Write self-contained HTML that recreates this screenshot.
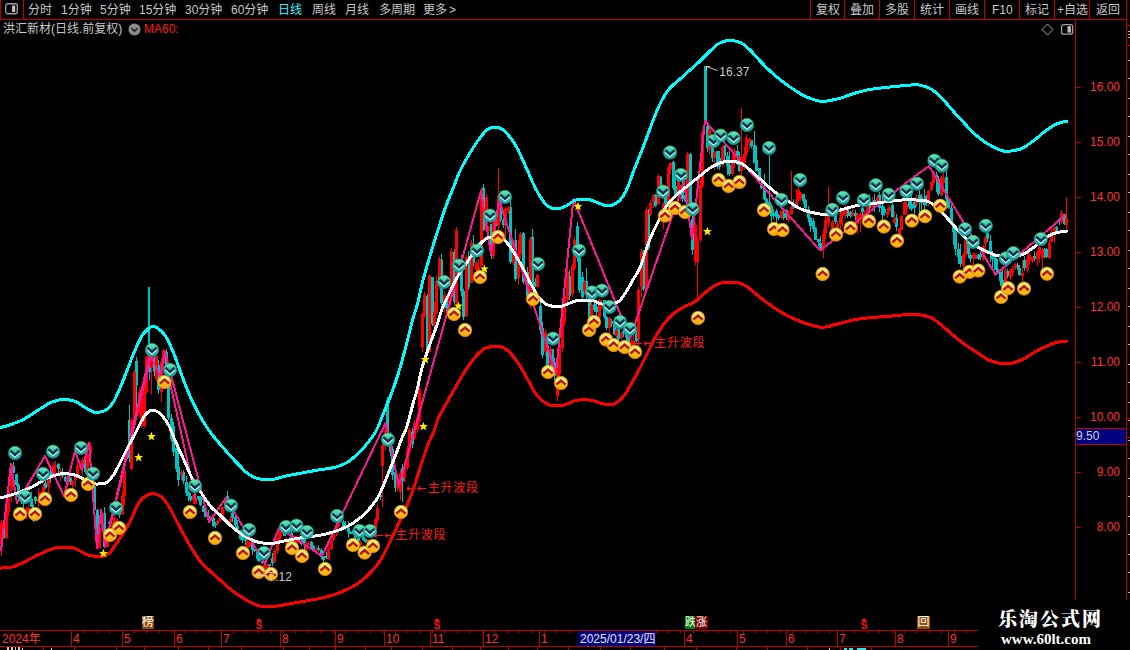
<!DOCTYPE html>
<html lang="zh-CN">
<head>
<meta charset="utf-8">
<title>洪汇新材 日线</title>
<style>
html,body{margin:0;padding:0;background:#000;}
body{width:1130px;height:650px;overflow:hidden;position:relative;font-family:"Liberation Sans","Noto Sans CJK SC",sans-serif;font-size:12px;color:#c8c8c8;}
.abs{position:absolute;white-space:nowrap;line-height:14px;}
.tb{position:absolute;top:2px;height:16px;line-height:16px;font-size:12px;color:#c8c8c8;white-space:nowrap;}
.hl{position:absolute;background:#c00000;height:1px;}
.vl{position:absolute;background:#c00000;width:1px;}
.ax{position:absolute;left:1084px;width:36px;text-align:right;color:#ff3232;font-size:12px;line-height:14px;}
.mo{position:absolute;top:632px;color:#ff3232;font-size:12px;line-height:14px;}
.lab{position:absolute;color:#ff2020;font-size:12px;line-height:14px;white-space:nowrap;}
.badge{position:absolute;width:12px;height:13px;line-height:13px;font-size:11px;color:#fff;text-align:center;overflow:hidden;}
</style>
</head>
<body>
<svg id="chart" width="1130" height="650" viewBox="0 0 1130 650" style="position:absolute;left:0;top:0">
<defs>
<linearGradient id="gg" x1="0" y1="0" x2="0" y2="1"><stop offset="0" stop-color="#70ecb0"/><stop offset="0.5" stop-color="#2cc2a4"/><stop offset="1" stop-color="#10a0a4"/></linearGradient>
<linearGradient id="yg" x1="0" y1="0" x2="0" y2="1"><stop offset="0" stop-color="#fff45a"/><stop offset="0.5" stop-color="#ffd21e"/><stop offset="1" stop-color="#ff9a10"/></linearGradient>
<g id="gi"><circle r="6.7" fill="url(#gg)" stroke="#178a84" stroke-width="0.7"/><path d="M-4.6,-0.2 L0,4 L4.6,-0.2" fill="none" stroke="#e8f6f0" stroke-width="1.3"/><path d="M-4.6,-2.4 L0,1.8 L4.6,-2.4" fill="none" stroke="#0e3350" stroke-width="2.4"/></g>
<g id="yi"><circle r="6.7" fill="url(#yg)" stroke="#e89400" stroke-width="0.7"/><path d="M-4.6,-0.9 L0,-4.7 L4.6,-0.9" fill="none" stroke="#fff3d0" stroke-width="1.3"/><path d="M-4.6,1.6 L0,-2.4 L4.6,1.6" fill="none" stroke="#b81410" stroke-width="2.5"/></g>
<path id="st" d="M0,-4.6 L1.2,-1.4 L4.5,-1.4 L1.9,0.6 L2.9,4 L0,2 L-2.9,4 L-1.9,0.6 L-4.5,-1.4 L-1.2,-1.4Z" fill="#ffee00"/>
</defs>
<g shape-rendering="crispEdges"><path d="M3,520h1V539h-1zM13,462h1V473h-1zM16,474h1V486h-1zM18,483h1V499h-1zM21,495h1V504h-1zM23,499h1V515h-1zM31,492h1V507h-1zM33,505h1V522h-1zM35,496h1V504h-1zM45,481h1V489h-1zM50,470h1V483h-1zM58,463h1V473h-1zM62,468h1V478h-1zM65,472h1V482h-1zM70,477h1V485h-1zM85,459h1V474h-1zM94,485h1V510h-1zM97,509h1V548h-1zM104,507h1V548h-1zM109,521h1V525h-1zM119,509h1V518h-1zM126,455h1V462h-1zM129,405h1V462h-1zM136,357h1V411h-1zM149,287h1V380h-1zM154,355h1V376h-1zM158,360h1V394h-1zM166,349h1V370h-1zM168,366h1V420h-1zM171,414h1V442h-1zM173,422h1V456h-1zM176,440h1V472h-1zM178,450h1V486h-1zM183,470h1V484h-1zM186,476h1V496h-1zM188,491h1V501h-1zM190,493h1V502h-1zM198,496h1V501h-1zM200,496h1V506h-1zM203,505h1V512h-1zM205,505h1V517h-1zM208,510h1V522h-1zM213,517h1V527h-1zM215,522h1V528h-1zM227,491h1V501h-1zM232,511h1V522h-1zM235,514h1V530h-1zM237,520h1V530h-1zM240,530h1V540h-1zM242,536h1V543h-1zM245,537h1V545h-1zM252,540h1V555h-1zM254,549h1V552h-1zM257,549h1V561h-1zM259,557h1V562h-1zM262,560h1V564h-1zM269,564h1V570h-1zM272,553h1V566h-1zM284,528h1V536h-1zM289,537h1V543h-1zM291,526h1V538h-1zM301,531h1V546h-1zM304,537h1V550h-1zM311,541h1V548h-1zM313,545h1V551h-1zM318,545h1V551h-1zM321,548h1V559h-1zM323,556h1V563h-1zM326,552h1V559h-1zM343,520h1V530h-1zM345,521h1V530h-1zM348,521h1V538h-1zM350,531h1V534h-1zM353,530h1V535h-1zM355,533h1V541h-1zM358,537h1V542h-1zM363,534h1V541h-1zM365,539h1V543h-1zM372,529h1V536h-1zM380,491h1V500h-1zM387,397h1V438h-1zM390,432h1V456h-1zM392,446h1V480h-1zM395,468h1V492h-1zM402,464h1V502h-1zM412,428h1V448h-1zM427,294h1V352h-1zM432,277h1V326h-1zM441,254h1V305h-1zM446,296h1V311h-1zM454,249h1V304h-1zM459,276h1V272h-1zM461,255h1V296h-1zM463,289h1V320h-1zM468,251h1V290h-1zM473,235h1V266h-1zM483,184h1V231h-1zM491,224h1V259h-1zM495,217h1V227h-1zM500,191h1V222h-1zM503,218h1V228h-1zM510,193h1V264h-1zM515,229h1V281h-1zM523,232h1V284h-1zM527,267h1V297h-1zM532,229h1V289h-1zM535,278h1V287h-1zM540,300h1V334h-1zM542,322h1V358h-1zM547,340h1V368h-1zM552,349h1V370h-1zM554,358h1V380h-1zM569,270h1V300h-1zM577,222h1V262h-1zM579,254h1V293h-1zM582,272h1V300h-1zM586,268h1V301h-1zM589,297h1V320h-1zM594,297h1V312h-1zM596,304h1V319h-1zM604,300h1V319h-1zM606,316h1V330h-1zM611,319h1V327h-1zM614,320h1V335h-1zM618,327h1V349h-1zM623,329h1V337h-1zM626,332h1V347h-1zM628,334h1V344h-1zM636,331h1V342h-1zM643,250h1V291h-1zM648,209h1V250h-1zM655,194h1V207h-1zM660,176h1V195h-1zM665,188h1V206h-1zM673,161h1V190h-1zM675,171h1V198h-1zM682,177h1V202h-1zM685,189h1V202h-1zM690,153h1V216h-1zM692,216h1V255h-1zM705,66h1V124h-1zM707,122h1V152h-1zM712,136h1V162h-1zM717,151h1V169h-1zM719,151h1V170h-1zM724,145h1V161h-1zM727,152h1V175h-1zM729,151h1V176h-1zM737,145h1V165h-1zM739,152h1V172h-1zM751,140h1V148h-1zM754,131h1V163h-1zM756,146h1V171h-1zM759,168h1V182h-1zM761,180h1V189h-1zM764,174h1V200h-1zM766,198h1V206h-1zM769,155h1V209h-1zM771,204h1V229h-1zM773,209h1V219h-1zM776,209h1V224h-1zM778,214h1V220h-1zM783,210h1V220h-1zM786,209h1V220h-1zM793,199h1V209h-1zM803,194h1V204h-1zM805,199h1V212h-1zM808,206h1V222h-1zM810,217h1V232h-1zM813,218h1V232h-1zM815,227h1V240h-1zM818,239h1V246h-1zM820,236h1V250h-1zM830,203h1V213h-1zM835,213h1V224h-1zM847,208h1V218h-1zM850,211h1V218h-1zM855,210h1V220h-1zM862,207h1V216h-1zM869,194h1V211h-1zM874,194h1V212h-1zM879,192h1V212h-1zM882,196h1V220h-1zM884,207h1V216h-1zM892,200h1V218h-1zM896,214h1V231h-1zM909,197h1V209h-1zM911,194h1V211h-1zM914,201h1V215h-1zM919,189h1V213h-1zM921,194h1V210h-1zM924,189h1V215h-1zM926,195h1V206h-1zM936,172h1V192h-1zM938,176h1V196h-1zM946,169h1V205h-1zM948,198h1V209h-1zM951,202h1V225h-1zM953,223h1V245h-1zM955,225h1V255h-1zM958,243h1V264h-1zM960,244h1V267h-1zM968,241h1V258h-1zM970,253h1V262h-1zM978,254h1V260h-1zM980,252h1V260h-1zM987,231h1V242h-1zM990,235h1V262h-1zM992,251h1V269h-1zM995,255h1V270h-1zM997,259h1V274h-1zM1000,270h1V286h-1zM1002,268h1V287h-1zM1007,269h1V278h-1zM1017,263h1V270h-1zM1019,265h1V276h-1zM1024,256h1V271h-1zM1034,252h1V261h-1zM1044,248h1V258h-1zM1046,248h1V258h-1zM1056,226h1V232h-1zM1059,218h1V225h-1zM1064,214h1V225h-1z" fill="#00c0c0"/><path d="M2,523h3V538h-3zM12,466h3V473h-3zM15,474h3V485h-3zM17,485h3V497h-3zM20,497h3V501h-3zM22,500h3V504h-3zM30,499h3V507h-3zM32,507h3V511h-3zM34,497h3V501h-3zM44,483h3V488h-3zM49,472h3V475h-3zM57,464h3V469h-3zM61,472h3V476h-3zM64,477h3V481h-3zM69,478h3V482h-3zM84,461h3V472h-3zM93,486h3V510h-3zM96,510h3V546h-3zM103,513h3V547h-3zM108,522h3V524h-3zM118,510h3V515h-3zM125,456h3V459h-3zM128,420h3V458h-3zM135,361h3V385h-3zM148,352h3V372h-3zM153,358h3V372h-3zM157,365h3V390h-3zM165,352h3V366h-3zM167,379h3V418h-3zM170,418h3V439h-3zM172,426h3V452h-3zM175,448h3V469h-3zM177,467h3V480h-3zM182,472h3V481h-3zM185,482h3V493h-3zM187,492h3V496h-3zM189,496h3V500h-3zM197,496h3V499h-3zM199,497h3V505h-3zM202,506h3V512h-3zM204,512h3V517h-3zM207,516h3V520h-3zM212,518h3V526h-3zM214,522h3V525h-3zM226,496h3V501h-3zM231,513h3V518h-3zM234,517h3V525h-3zM236,526h3V529h-3zM239,530h3V539h-3zM241,537h3V540h-3zM244,539h3V541h-3zM251,542h3V550h-3zM253,550h3V551h-3zM256,551h3V559h-3zM258,559h3V561h-3zM261,561h3V563h-3zM268,564h3V566h-3zM271,558h3V563h-3zM283,529h3V536h-3zM288,539h3V542h-3zM290,533h3V536h-3zM300,538h3V544h-3zM303,539h3V543h-3zM310,542h3V547h-3zM312,546h3V550h-3zM317,548h3V550h-3zM320,550h3V557h-3zM322,556h3V560h-3zM325,556h3V558h-3zM342,522h3V529h-3zM344,525h3V528h-3zM347,528h3V532h-3zM349,532h3V534h-3zM352,530h3V534h-3zM354,535h3V538h-3zM357,538h3V541h-3zM362,537h3V540h-3zM364,539h3V542h-3zM371,530h3V534h-3zM379,495h3V497h-3zM386,400h3V434h-3zM389,438h3V452h-3zM391,449h3V475h-3zM394,472h3V488h-3zM401,468h3V481h-3zM411,432h3V444h-3zM426,296h3V351h-3zM431,277h3V324h-3zM440,260h3V303h-3zM445,296h3V308h-3zM453,252h3V302h-3zM458,261h3V270h-3zM460,268h3V291h-3zM462,291h3V317h-3zM467,258h3V287h-3zM472,246h3V263h-3zM482,188h3V230h-3zM490,224h3V256h-3zM494,218h3V226h-3zM499,194h3V220h-3zM502,220h3V225h-3zM509,207h3V262h-3zM514,240h3V279h-3zM522,233h3V282h-3zM526,272h3V296h-3zM531,237h3V287h-3zM534,282h3V286h-3zM539,306h3V330h-3zM541,328h3V355h-3zM546,345h3V366h-3zM551,349h3V366h-3zM553,362h3V376h-3zM568,276h3V296h-3zM576,226h3V258h-3zM578,258h3V290h-3zM581,277h3V297h-3zM585,281h3V294h-3zM588,297h3V317h-3zM593,304h3V310h-3zM595,307h3V312h-3zM603,300h3V317h-3zM605,317h3V328h-3zM610,321h3V324h-3zM613,322h3V334h-3zM617,329h3V339h-3zM622,331h3V334h-3zM625,332h3V337h-3zM627,337h3V342h-3zM635,334h3V341h-3zM642,251h3V289h-3zM647,210h3V248h-3zM654,195h3V206h-3zM659,177h3V192h-3zM664,194h3V204h-3zM672,162h3V188h-3zM674,186h3V195h-3zM681,185h3V199h-3zM684,195h3V201h-3zM689,154h3V214h-3zM691,219h3V250h-3zM704,66h3V122h-3zM706,126h3V148h-3zM711,140h3V158h-3zM716,151h3V167h-3zM718,158h3V167h-3zM723,146h3V156h-3zM726,156h3V166h-3zM728,165h3V174h-3zM736,151h3V156h-3zM738,157h3V171h-3zM750,140h3V146h-3zM753,145h3V163h-3zM755,160h3V171h-3zM758,168h3V181h-3zM760,182h3V188h-3zM763,187h3V199h-3zM765,199h3V204h-3zM768,202h3V206h-3zM770,206h3V216h-3zM772,213h3V216h-3zM775,211h3V217h-3zM777,215h3V218h-3zM782,213h3V218h-3zM785,210h3V218h-3zM792,205h3V208h-3zM802,194h3V201h-3zM804,200h3V208h-3zM807,209h3V218h-3zM809,218h3V226h-3zM812,221h3V229h-3zM814,228h3V240h-3zM817,239h3V242h-3zM819,243h3V248h-3zM829,205h3V213h-3zM834,214h3V222h-3zM846,208h3V216h-3zM849,212h3V216h-3zM854,213h3V216h-3zM861,208h3V212h-3zM868,203h3V208h-3zM873,200h3V205h-3zM878,195h3V208h-3zM881,206h3V215h-3zM883,209h3V213h-3zM891,205h3V217h-3zM895,218h3V227h-3zM908,198h3V207h-3zM910,204h3V209h-3zM913,202h3V208h-3zM918,195h3V199h-3zM920,197h3V203h-3zM923,199h3V205h-3zM925,196h3V203h-3zM935,175h3V178h-3zM937,179h3V194h-3zM945,177h3V199h-3zM947,199h3V208h-3zM950,208h3V223h-3zM952,224h3V232h-3zM954,232h3V249h-3zM957,249h3V257h-3zM959,256h3V264h-3zM967,243h3V254h-3zM969,255h3V259h-3zM977,255h3V259h-3zM979,254h3V257h-3zM986,233h3V239h-3zM989,241h3V253h-3zM991,253h3V259h-3zM994,258h3V270h-3zM996,269h3V274h-3zM999,272h3V281h-3zM1001,280h3V285h-3zM1006,271h3V276h-3zM1016,265h3V268h-3zM1018,268h3V275h-3zM1023,260h3V268h-3zM1033,256h3V259h-3zM1043,249h3V256h-3zM1045,249h3V257h-3zM1055,227h3V231h-3zM1058,219h3V222h-3zM1063,214h3V224h-3z" fill="#00c0c0"/><path d="M1,520h1V556h-1zM6,506h1V539h-1zM8,484h1V516h-1zM11,463h1V502h-1zM26,507h1V519h-1zM28,505h1V511h-1zM38,488h1V507h-1zM40,492h1V500h-1zM43,484h1V494h-1zM48,473h1V495h-1zM53,462h1V476h-1zM55,461h1V474h-1zM60,468h1V481h-1zM67,474h1V487h-1zM72,480h1V490h-1zM75,474h1V487h-1zM77,457h1V478h-1zM80,464h1V469h-1zM82,458h1V476h-1zM87,443h1V476h-1zM90,443h1V455h-1zM92,484h1V490h-1zM99,524h1V549h-1zM102,512h1V531h-1zM107,535h1V547h-1zM112,523h1V535h-1zM114,511h1V525h-1zM117,518h1V527h-1zM122,492h1V515h-1zM124,470h1V505h-1zM131,418h1V470h-1zM134,370h1V422h-1zM139,388h1V415h-1zM141,394h1V428h-1zM144,385h1V428h-1zM146,355h1V394h-1zM151,353h1V394h-1zM156,353h1V382h-1zM161,358h1V402h-1zM163,349h1V368h-1zM181,470h1V480h-1zM193,494h1V504h-1zM195,496h1V504h-1zM210,515h1V522h-1zM217,520h1V526h-1zM220,515h1V521h-1zM222,507h1V517h-1zM225,498h1V511h-1zM230,516h1V526h-1zM247,535h1V547h-1zM249,540h1V548h-1zM264,563h1V569h-1zM267,564h1V569h-1zM274,549h1V563h-1zM277,538h1V554h-1zM279,528h1V540h-1zM281,528h1V537h-1zM286,537h1V545h-1zM294,535h1V543h-1zM296,536h1V545h-1zM299,534h1V544h-1zM306,542h1V551h-1zM308,541h1V547h-1zM316,546h1V551h-1zM328,543h1V560h-1zM331,539h1V550h-1zM333,533h1V541h-1zM336,524h1V536h-1zM338,520h1V528h-1zM340,521h1V523h-1zM360,541h1V548h-1zM368,539h1V545h-1zM370,541h1V548h-1zM375,518h1V537h-1zM377,505h1V523h-1zM382,440h1V507h-1zM385,425h1V450h-1zM397,474h1V491h-1zM400,470h1V500h-1zM404,462h1V482h-1zM407,446h1V470h-1zM409,428h1V455h-1zM414,420h1V440h-1zM417,414h1V433h-1zM419,386h1V423h-1zM422,313h1V352h-1zM424,292h1V318h-1zM429,274h1V352h-1zM434,302h1V328h-1zM436,276h1V315h-1zM439,257h1V289h-1zM444,292h1V313h-1zM449,288h1V307h-1zM451,248h1V292h-1zM456,227h1V316h-1zM466,255h1V317h-1zM471,240h1V283h-1zM476,261h1V271h-1zM478,259h1V276h-1zM481,188h1V267h-1zM486,194h1V231h-1zM488,226h1V235h-1zM493,215h1V259h-1zM498,168h1V233h-1zM505,207h1V239h-1zM508,206h1V214h-1zM513,240h1V265h-1zM518,240h1V285h-1zM520,232h1V259h-1zM525,271h1V285h-1zM530,237h1V308h-1zM537,274h1V287h-1zM545,329h1V356h-1zM550,346h1V370h-1zM557,366h1V401h-1zM559,340h1V378h-1zM562,306h1V352h-1zM564,290h1V326h-1zM567,264h1V303h-1zM572,264h1V297h-1zM574,236h1V270h-1zM584,280h1V295h-1zM591,302h1V319h-1zM599,299h1V323h-1zM601,300h1V309h-1zM609,317h1V335h-1zM616,326h1V338h-1zM621,332h1V339h-1zM631,339h1V354h-1zM633,329h1V347h-1zM638,287h1V352h-1zM641,249h1V297h-1zM646,207h1V293h-1zM650,200h1V216h-1zM653,194h1V208h-1zM658,174h1V205h-1zM663,202h1V229h-1zM668,165h1V217h-1zM670,162h1V174h-1zM678,168h1V210h-1zM680,185h1V201h-1zM687,152h1V205h-1zM695,223h1V265h-1zM697,236h1V300h-1zM700,180h1V242h-1zM702,130h1V188h-1zM709,128h1V155h-1zM714,151h1V170h-1zM722,146h1V167h-1zM732,153h1V176h-1zM734,148h1V168h-1zM741,108h1V175h-1zM744,147h1V170h-1zM746,135h1V157h-1zM749,138h1V149h-1zM781,210h1V219h-1zM788,211h1V222h-1zM791,171h1V215h-1zM796,189h1V209h-1zM798,179h1V201h-1zM800,192h1V201h-1zM823,229h1V258h-1zM825,215h1V239h-1zM828,187h1V227h-1zM832,220h1V230h-1zM837,221h1V233h-1zM840,207h1V234h-1zM842,208h1V226h-1zM845,205h1V218h-1zM852,207h1V217h-1zM857,213h1V234h-1zM860,212h1V232h-1zM864,210h1V220h-1zM867,206h1V222h-1zM872,197h1V212h-1zM877,195h1V206h-1zM887,208h1V218h-1zM889,205h1V213h-1zM894,211h1V224h-1zM899,228h1V238h-1zM901,215h1V230h-1zM904,189h1V215h-1zM906,201h1V214h-1zM916,194h1V207h-1zM928,190h1V206h-1zM931,182h1V191h-1zM933,171h1V185h-1zM941,176h1V196h-1zM943,166h1V192h-1zM963,253h1V271h-1zM965,239h1V258h-1zM973,252h1V268h-1zM975,254h1V259h-1zM983,245h1V261h-1zM985,236h1V252h-1zM1005,268h1V291h-1zM1010,269h1V280h-1zM1012,266h1V276h-1zM1015,263h1V270h-1zM1022,260h1V282h-1zM1027,252h1V273h-1zM1029,252h1V264h-1zM1032,257h1V263h-1zM1037,251h1V266h-1zM1039,244h1V263h-1zM1042,248h1V271h-1zM1049,240h1V259h-1zM1051,226h1V242h-1zM1054,227h1V243h-1zM1061,210h1V224h-1zM1066,197h1V231h-1z" fill="#ff0000"/><path d="M0,523h3V544h-3zM5,512h3V538h-3zM7,490h3V512h-3zM10,464h3V490h-3zM25,510h3V514h-3zM27,508h3V510h-3zM37,499h3V502h-3zM39,492h3V499h-3zM42,487h3V493h-3zM47,473h3V487h-3zM52,465h3V475h-3zM54,465h3V467h-3zM59,471h3V475h-3zM66,478h3V485h-3zM71,481h3V485h-3zM74,477h3V480h-3zM76,466h3V477h-3zM79,464h3V468h-3zM81,460h3V464h-3zM86,454h3V472h-3zM89,446h3V453h-3zM91,485h3V490h-3zM98,528h3V548h-3zM101,513h3V529h-3zM106,537h3V547h-3zM111,525h3V531h-3zM113,518h3V525h-3zM116,521h3V526h-3zM121,496h3V514h-3zM123,471h3V496h-3zM130,420h3V469h-3zM133,372h3V420h-3zM138,392h3V413h-3zM140,398h3V426h-3zM143,390h3V426h-3zM145,357h3V392h-3zM150,356h3V368h-3zM155,356h3V379h-3zM160,362h3V392h-3zM162,350h3V364h-3zM180,472h3V475h-3zM192,496h3V500h-3zM194,498h3V504h-3zM209,519h3V521h-3zM216,521h3V524h-3zM219,515h3V521h-3zM221,507h3V515h-3zM224,500h3V508h-3zM229,519h3V522h-3zM246,542h3V547h-3zM248,542h3V547h-3zM263,565h3V569h-3zM266,565h3V568h-3zM273,551h3V562h-3zM276,538h3V551h-3zM278,529h3V539h-3zM280,529h3V534h-3zM285,539h3V543h-3zM293,536h3V540h-3zM295,539h3V542h-3zM298,540h3V542h-3zM305,544h3V550h-3zM307,543h3V545h-3zM315,549h3V551h-3zM327,549h3V559h-3zM330,541h3V549h-3zM332,534h3V540h-3zM335,526h3V533h-3zM337,523h3V526h-3zM339,521h3V523h-3zM359,542h3V545h-3zM367,540h3V542h-3zM369,544h3V547h-3zM374,520h3V533h-3zM376,508h3V520h-3zM381,445h3V466h-3zM384,430h3V446h-3zM396,478h3V488h-3zM399,473h3V492h-3zM403,466h3V478h-3zM406,450h3V468h-3zM408,430h3V452h-3zM413,423h3V438h-3zM416,418h3V430h-3zM418,389h3V421h-3zM421,314h3V347h-3zM423,295h3V316h-3zM428,276h3V352h-3zM433,312h3V327h-3zM435,281h3V313h-3zM438,259h3V280h-3zM443,295h3V303h-3zM448,290h3V306h-3zM450,251h3V289h-3zM455,230h3V303h-3zM465,257h3V316h-3zM470,243h3V283h-3zM475,263h3V270h-3zM477,267h3V276h-3zM480,190h3V266h-3zM485,197h3V230h-3zM487,227h3V231h-3zM492,218h3V256h-3zM497,195h3V226h-3zM504,209h3V224h-3zM507,207h3V211h-3zM512,240h3V263h-3zM517,254h3V278h-3zM519,234h3V254h-3zM524,273h3V283h-3zM529,239h3V295h-3zM536,275h3V287h-3zM544,332h3V352h-3zM549,350h3V364h-3zM556,372h3V396h-3zM558,345h3V374h-3zM561,318h3V348h-3zM563,296h3V322h-3zM566,272h3V300h-3zM571,266h3V294h-3zM573,240h3V268h-3zM583,282h3V291h-3zM590,305h3V318h-3zM598,300h3V317h-3zM600,303h3V306h-3zM608,318h3V328h-3zM615,330h3V336h-3zM620,333h3V338h-3zM630,342h3V346h-3zM632,341h3V344h-3zM637,290h3V339h-3zM640,252h3V287h-3zM645,210h3V290h-3zM649,203h3V215h-3zM652,196h3V201h-3zM657,176h3V204h-3zM662,204h3V214h-3zM667,168h3V205h-3zM669,163h3V169h-3zM677,171h3V194h-3zM679,187h3V190h-3zM686,154h3V204h-3zM694,225h3V262h-3zM696,240h3V262h-3zM699,185h3V240h-3zM701,133h3V186h-3zM708,130h3V150h-3zM713,152h3V158h-3zM721,147h3V165h-3zM731,163h3V174h-3zM733,151h3V163h-3zM740,157h3V171h-3zM743,154h3V163h-3zM745,138h3V154h-3zM748,139h3V143h-3zM780,211h3V218h-3zM787,213h3V220h-3zM790,207h3V214h-3zM795,201h3V207h-3zM797,190h3V201h-3zM799,193h3V199h-3zM822,234h3V249h-3zM824,220h3V234h-3zM827,206h3V223h-3zM831,222h3V229h-3zM836,224h3V232h-3zM839,217h3V224h-3zM841,209h3V216h-3zM844,209h3V215h-3zM851,213h3V216h-3zM856,215h3V224h-3zM859,214h3V219h-3zM863,213h3V216h-3zM866,206h3V215h-3zM871,202h3V207h-3zM876,197h3V204h-3zM886,212h3V215h-3zM888,207h3V211h-3zM893,219h3V223h-3zM898,228h3V237h-3zM900,216h3V230h-3zM903,202h3V215h-3zM905,204h3V209h-3zM915,197h3V205h-3zM927,191h3V203h-3zM930,182h3V190h-3zM932,174h3V183h-3zM940,177h3V195h-3zM942,178h3V183h-3zM962,255h3V266h-3zM964,240h3V255h-3zM972,254h3V258h-3zM974,255h3V259h-3zM982,247h3V259h-3zM984,238h3V244h-3zM1004,271h3V286h-3zM1009,270h3V277h-3zM1011,269h3V273h-3zM1014,264h3V268h-3zM1021,273h3V276h-3zM1026,258h3V270h-3zM1028,255h3V259h-3zM1031,257h3V261h-3zM1036,252h3V259h-3zM1038,247h3V254h-3zM1041,250h3V258h-3zM1048,243h3V258h-3zM1050,232h3V242h-3zM1053,228h3V235h-3zM1060,213h3V222h-3zM1065,218h3V225h-3z" fill="#ff0000"/></g>
<path d="M148.5,287V352" stroke="#00c0c0" stroke-width="1" fill="none" shape-rendering="crispEdges"/>
<text x="406" y="492.2" font-size="12" fill="#ff1a1a" textLength="72" lengthAdjust="spacing" font-family="DejaVu Sans, Liberation Sans, Noto Sans CJK SC, sans-serif">←←主升波段</text>
<text x="373.5" y="539.4" font-size="12" fill="#ff1a1a" textLength="72" lengthAdjust="spacing" font-family="DejaVu Sans, Liberation Sans, Noto Sans CJK SC, sans-serif">←←主升波段</text>
<text x="632.5" y="347.2" font-size="12" fill="#ff1a1a" textLength="72" lengthAdjust="spacing" font-family="DejaVu Sans, Liberation Sans, Noto Sans CJK SC, sans-serif">←←主升波段</text>
<path d="M1.0,551.0 L11.0,464.0 L17.0,503.0 L45.0,456.0 L64.0,496.0 L75.0,451.0 L82.0,470.0 L89.0,443.0 L97.0,548.0 L101.0,510.0 L105.0,546.0 L150.0,354.0 L160.0,376.0 L165.0,352.0 L198.0,478.0 L209.0,522.0 L226.0,498.0 L265.0,564.0 L279.0,528.0 L322.0,556.0 L385.6,423.0 L399.0,486.0 L481.0,191.0 L491.0,254.0 L499.0,200.0 L556.0,373.0 L573.4,199.0 L630.0,338.0 L684.0,182.0 L692.0,239.0 L705.0,121.0 L820.0,250.5 L910.0,180.0 L929.0,166.0 L995.6,274.5 L1066.0,214.6" shape-rendering="crispEdges" stroke="#ff1493" stroke-width="2" fill="none" stroke-linejoin="round"/>
<path d="M110.0,526.0 L152.0,352.0" shape-rendering="crispEdges" stroke="#ff1493" stroke-width="2" fill="none"/>
<path d="M170.0,383.0 L196.0,500.0" shape-rendering="crispEdges" stroke="#ff1493" stroke-width="2" fill="none"/>
<path d="M0.0,427.5 L2.0,427.1 L4.0,426.6 L6.0,426.1 L8.0,425.5 L10.0,424.8 L12.0,424.1 L14.0,423.4 L16.0,422.6 L18.0,421.8 L20.0,421.0 L22.0,420.1 L24.0,419.1 L26.0,417.9 L28.0,416.7 L30.0,415.4 L32.0,414.1 L34.0,412.8 L36.0,411.5 L38.0,410.2 L40.0,409.0 L42.0,407.7 L44.0,406.4 L46.0,405.1 L48.0,403.9 L50.0,402.8 L52.0,402.0 L54.0,401.4 L56.0,400.8 L58.0,400.2 L60.0,399.8 L62.0,399.5 L64.0,399.4 L66.0,399.5 L68.0,399.7 L70.0,400.1 L72.0,400.5 L74.0,401.0 L76.0,401.7 L78.0,402.8 L80.0,404.1 L82.0,405.5 L84.0,406.9 L86.0,408.0 L88.0,409.1 L90.0,410.3 L92.0,411.3 L94.0,412.1 L96.0,412.4 L98.0,412.3 L100.0,412.0 L102.0,411.5 L104.0,411.0 L106.0,410.0 L108.0,408.4 L110.0,406.4 L112.0,404.0 L114.0,401.0 L116.0,397.0 L118.0,392.5 L120.0,388.0 L122.0,383.3 L124.0,378.3 L126.0,373.1 L128.0,368.0 L130.0,362.9 L132.0,357.6 L134.0,352.6 L136.0,348.0 L138.0,343.6 L140.0,339.4 L142.0,335.7 L144.0,333.0 L146.0,330.9 L148.0,328.9 L150.0,327.4 L152.0,326.5 L154.0,326.5 L156.0,327.3 L158.0,328.6 L160.0,330.0 L162.0,331.8 L164.0,334.2 L166.0,337.0 L168.0,340.4 L170.0,344.6 L172.0,349.2 L174.0,354.0 L176.0,359.2 L178.0,364.8 L180.0,370.5 L182.0,376.0 L184.0,381.2 L186.0,386.4 L188.0,391.3 L190.0,396.0 L192.0,400.4 L194.0,404.5 L196.0,408.5 L198.0,412.3 L200.0,416.0 L202.0,419.5 L204.0,422.9 L206.0,426.0 L208.0,429.0 L210.0,431.8 L212.0,434.4 L214.0,437.0 L216.0,439.4 L218.0,441.8 L220.0,444.1 L222.0,446.4 L224.0,448.7 L226.0,451.0 L228.0,453.3 L230.0,455.5 L232.0,457.7 L234.0,459.9 L236.0,462.0 L238.0,464.0 L240.0,466.0 L242.0,468.1 L244.0,470.2 L246.0,472.1 L248.0,473.7 L250.0,475.0 L252.0,476.1 L254.0,477.1 L256.0,478.0 L258.0,478.6 L260.0,479.0 L262.0,479.2 L264.0,479.4 L266.0,479.5 L268.0,479.6 L270.0,479.6 L272.0,479.5 L274.0,479.2 L276.0,478.7 L278.0,478.2 L280.0,477.6 L282.0,477.0 L284.0,476.5 L286.0,476.0 L288.0,475.6 L290.0,475.2 L292.0,474.8 L294.0,474.5 L296.0,474.1 L298.0,473.7 L300.0,473.4 L302.0,473.0 L304.0,472.6 L306.0,472.2 L308.0,471.9 L310.0,471.5 L312.0,471.1 L314.0,470.7 L316.0,470.3 L318.0,470.0 L320.0,469.7 L322.0,469.4 L324.0,469.1 L326.0,468.9 L328.0,468.6 L330.0,468.3 L332.0,467.9 L334.0,467.5 L336.0,467.0 L338.0,466.4 L340.0,465.7 L342.0,464.9 L344.0,464.0 L346.0,463.0 L348.0,461.8 L350.0,460.5 L352.0,458.9 L354.0,457.2 L356.0,455.3 L358.0,453.5 L360.0,451.6 L362.0,449.5 L364.0,447.3 L366.0,445.0 L368.0,442.5 L370.0,440.0 L372.0,437.3 L374.0,434.3 L376.0,431.0 L378.0,426.9 L380.0,422.1 L382.0,417.0 L384.0,412.0 L386.0,407.2 L388.0,402.3 L390.0,397.3 L392.0,392.0 L394.0,386.4 L396.0,380.6 L398.0,374.5 L400.0,368.0 L402.0,361.0 L404.0,353.6 L406.0,346.0 L408.0,338.0 L410.0,329.8 L412.0,322.0 L414.0,315.3 L416.0,309.0 L418.0,302.0 L420.0,293.1 L422.0,284.0 L424.0,276.4 L426.0,269.4 L428.0,262.7 L430.0,256.0 L432.0,249.3 L434.0,242.7 L436.0,236.3 L438.0,230.0 L440.0,223.8 L442.0,217.6 L444.0,211.6 L446.0,206.0 L448.0,200.8 L450.0,195.8 L452.0,191.0 L454.0,186.0 L456.0,180.6 L458.0,175.4 L460.0,170.9 L462.0,166.9 L464.0,163.2 L466.0,159.7 L468.0,156.3 L470.0,152.9 L472.0,149.6 L474.0,146.5 L476.0,143.5 L478.0,140.5 L480.0,137.7 L482.0,135.1 L484.0,132.9 L486.0,130.8 L488.0,129.1 L490.0,128.2 L492.0,127.5 L494.0,127.1 L496.0,127.1 L498.0,127.5 L500.0,128.2 L502.0,129.1 L504.0,130.6 L506.0,132.6 L508.0,134.9 L510.0,137.2 L512.0,139.9 L514.0,142.9 L516.0,146.3 L518.0,149.8 L520.0,153.9 L522.0,158.3 L524.0,162.8 L526.0,167.2 L528.0,171.8 L530.0,176.4 L532.0,180.9 L534.0,185.1 L536.0,189.2 L538.0,193.0 L540.0,196.5 L542.0,199.4 L544.0,202.2 L546.0,204.6 L548.0,206.4 L550.0,207.4 L552.0,208.2 L554.0,208.8 L556.0,209.0 L558.0,208.8 L560.0,208.3 L562.0,207.6 L564.0,206.8 L566.0,206.0 L568.0,204.9 L570.0,203.5 L572.0,202.0 L574.0,200.7 L576.0,200.0 L578.0,199.7 L580.0,199.4 L582.0,199.2 L584.0,199.0 L586.0,199.0 L588.0,199.2 L590.0,199.8 L592.0,200.5 L594.0,201.3 L596.0,202.0 L598.0,202.7 L600.0,203.6 L602.0,204.5 L604.0,205.2 L606.0,205.8 L608.0,206.0 L610.0,205.8 L612.0,205.2 L614.0,204.3 L616.0,203.2 L618.0,202.0 L620.0,200.2 L622.0,197.7 L624.0,194.5 L626.0,191.0 L628.0,186.6 L630.0,181.3 L632.0,175.5 L634.0,170.0 L636.0,165.0 L638.0,160.0 L640.0,155.1 L642.0,150.0 L644.0,144.7 L646.0,139.4 L648.0,134.0 L650.0,128.6 L652.0,123.1 L654.0,118.0 L656.0,113.1 L658.0,108.3 L660.0,103.9 L662.0,100.0 L664.0,96.5 L666.0,93.3 L668.0,90.5 L670.0,88.0 L672.0,85.9 L674.0,84.1 L676.0,82.4 L678.0,80.7 L680.0,79.0 L682.0,77.2 L684.0,75.4 L686.0,73.6 L688.0,71.8 L690.0,70.0 L692.0,68.2 L694.0,66.4 L696.0,64.7 L698.0,62.9 L700.0,61.0 L702.0,59.0 L704.0,57.0 L706.0,54.9 L708.0,52.9 L710.0,51.0 L712.0,49.2 L714.0,47.3 L716.0,45.5 L718.0,44.0 L720.0,43.0 L722.0,42.2 L724.0,41.5 L726.0,40.9 L728.0,40.5 L730.0,40.4 L732.0,40.5 L734.0,40.8 L736.0,41.2 L738.0,41.8 L740.0,42.4 L742.0,43.3 L744.0,44.7 L746.0,46.3 L748.0,48.2 L750.0,50.0 L752.0,52.0 L754.0,54.2 L756.0,56.5 L758.0,58.8 L760.0,61.0 L762.0,63.1 L764.0,65.1 L766.0,67.2 L768.0,69.1 L770.0,71.0 L772.0,72.8 L774.0,74.6 L776.0,76.3 L778.0,77.9 L780.0,79.5 L782.0,81.1 L784.0,82.6 L786.0,84.1 L788.0,85.6 L790.0,87.0 L792.0,88.3 L794.0,89.7 L796.0,91.0 L798.0,92.3 L800.0,93.6 L802.0,94.8 L804.0,95.9 L806.0,96.8 L808.0,97.5 L810.0,98.3 L812.0,99.0 L814.0,99.7 L816.0,100.3 L818.0,100.8 L820.0,101.1 L822.0,101.3 L824.0,101.3 L826.0,101.1 L828.0,100.9 L830.0,100.5 L832.0,100.1 L834.0,99.7 L836.0,99.2 L838.0,98.7 L840.0,98.3 L842.0,97.7 L844.0,97.0 L846.0,96.3 L848.0,95.5 L850.0,94.8 L852.0,94.1 L854.0,93.4 L856.0,92.9 L858.0,92.3 L860.0,91.7 L862.0,91.2 L864.0,90.7 L866.0,90.2 L868.0,89.8 L870.0,89.4 L872.0,89.1 L874.0,88.8 L876.0,88.5 L878.0,88.3 L880.0,88.1 L882.0,87.9 L884.0,87.7 L886.0,87.5 L888.0,87.2 L890.0,87.0 L892.0,86.8 L894.0,86.6 L896.0,86.4 L898.0,86.2 L900.0,86.0 L902.0,85.8 L904.0,85.7 L906.0,85.5 L908.0,85.3 L910.0,85.1 L912.0,84.9 L914.0,84.8 L916.0,84.8 L918.0,84.9 L920.0,85.2 L922.0,85.7 L924.0,86.3 L926.0,86.9 L928.0,87.6 L930.0,88.4 L932.0,89.6 L934.0,91.0 L936.0,92.7 L938.0,94.5 L940.0,96.3 L942.0,98.3 L944.0,100.5 L946.0,102.8 L948.0,105.2 L950.0,107.6 L952.0,109.8 L954.0,112.0 L956.0,114.2 L958.0,116.4 L960.0,118.6 L962.0,120.8 L964.0,122.9 L966.0,125.0 L968.0,127.2 L970.0,129.3 L972.0,131.4 L974.0,133.3 L976.0,135.2 L978.0,136.8 L980.0,138.4 L982.0,139.9 L984.0,141.4 L986.0,142.7 L988.0,144.0 L990.0,145.0 L992.0,146.1 L994.0,147.1 L996.0,148.1 L998.0,149.1 L1000.0,150.0 L1002.0,150.6 L1004.0,151.1 L1006.0,151.3 L1008.0,151.3 L1010.0,151.1 L1012.0,150.8 L1014.0,150.5 L1016.0,150.1 L1018.0,149.6 L1020.0,149.1 L1022.0,148.4 L1024.0,147.3 L1026.0,146.1 L1028.0,144.7 L1030.0,143.3 L1032.0,141.8 L1034.0,140.4 L1036.0,138.9 L1038.0,137.2 L1040.0,135.5 L1042.0,133.8 L1044.0,132.1 L1046.0,130.6 L1048.0,129.2 L1050.0,127.8 L1052.0,126.4 L1054.0,125.2 L1056.0,124.2 L1058.0,123.5 L1060.0,122.8 L1062.0,122.2 L1064.0,121.7 L1066.0,121.3 L1067.0,121.2" shape-rendering="crispEdges" stroke="#00ffff" stroke-width="3" fill="none" stroke-linejoin="round" stroke-linecap="round"/>
<path d="M0.0,498.0 L2.0,497.5 L4.0,497.0 L6.0,496.5 L8.0,495.9 L10.0,495.3 L12.0,494.7 L14.0,494.0 L16.0,493.4 L18.0,492.7 L20.0,492.0 L22.0,491.3 L24.0,490.5 L26.0,489.7 L28.0,488.8 L30.0,487.9 L32.0,487.0 L34.0,485.9 L36.0,484.8 L38.0,483.5 L40.0,482.3 L42.0,481.1 L44.0,480.0 L46.0,479.0 L48.0,478.0 L50.0,477.1 L52.0,476.2 L54.0,475.6 L56.0,475.0 L58.0,474.5 L60.0,474.0 L62.0,473.7 L64.0,473.6 L66.0,473.7 L68.0,473.8 L70.0,474.1 L72.0,474.4 L74.0,474.8 L76.0,475.5 L78.0,476.3 L80.0,477.2 L82.0,478.1 L84.0,479.0 L86.0,479.9 L88.0,481.0 L90.0,482.1 L92.0,483.1 L94.0,483.7 L96.0,484.0 L98.0,484.0 L100.0,483.9 L102.0,483.8 L104.0,483.6 L106.0,482.9 L108.0,481.3 L110.0,479.3 L112.0,477.0 L114.0,474.3 L116.0,470.7 L118.0,466.9 L120.0,463.0 L122.0,459.1 L124.0,455.1 L126.0,451.0 L128.0,447.0 L130.0,443.2 L132.0,439.5 L134.0,435.8 L136.0,432.0 L138.0,427.9 L140.0,424.0 L142.0,420.2 L144.0,416.6 L146.0,414.0 L148.0,412.1 L150.0,410.6 L152.0,410.0 L154.0,410.3 L156.0,411.0 L158.0,412.0 L160.0,413.4 L162.0,415.6 L164.0,418.0 L166.0,420.8 L168.0,424.2 L170.0,428.0 L172.0,432.8 L174.0,438.0 L176.0,442.6 L178.0,447.0 L180.0,451.3 L182.0,455.6 L184.0,460.0 L186.0,464.6 L188.0,469.3 L190.0,473.9 L192.0,478.0 L194.0,481.6 L196.0,484.9 L198.0,488.0 L200.0,491.0 L202.0,494.0 L204.0,497.0 L206.0,500.1 L208.0,503.0 L210.0,505.7 L212.0,508.0 L214.0,509.9 L216.0,511.6 L218.0,513.3 L220.0,515.0 L222.0,516.9 L224.0,519.0 L226.0,521.1 L228.0,523.1 L230.0,525.0 L232.0,526.8 L234.0,528.4 L236.0,530.0 L238.0,531.6 L240.0,533.0 L242.0,534.4 L244.0,535.7 L246.0,536.9 L248.0,538.0 L250.0,539.0 L252.0,539.9 L254.0,540.8 L256.0,541.5 L258.0,542.2 L260.0,542.6 L262.0,542.9 L264.0,543.2 L266.0,543.4 L268.0,543.5 L270.0,543.6 L272.0,543.5 L274.0,543.2 L276.0,542.9 L278.0,542.4 L280.0,541.9 L282.0,541.4 L284.0,541.0 L286.0,540.6 L288.0,540.2 L290.0,539.8 L292.0,539.3 L294.0,539.0 L296.0,538.6 L298.0,538.3 L300.0,538.0 L302.0,537.7 L304.0,537.5 L306.0,537.2 L308.0,537.0 L310.0,536.7 L312.0,536.4 L314.0,536.1 L316.0,535.8 L318.0,535.5 L320.0,535.2 L322.0,534.8 L324.0,534.4 L326.0,534.0 L328.0,533.4 L330.0,532.9 L332.0,532.3 L334.0,531.7 L336.0,531.0 L338.0,530.3 L340.0,529.6 L342.0,528.8 L344.0,527.9 L346.0,527.0 L348.0,526.0 L350.0,524.9 L352.0,523.7 L354.0,522.4 L356.0,521.0 L358.0,519.6 L360.0,518.0 L362.0,516.3 L364.0,514.4 L366.0,512.4 L368.0,510.3 L370.0,508.0 L372.0,505.6 L374.0,503.0 L376.0,500.2 L378.0,497.0 L380.0,493.2 L382.0,488.8 L384.0,483.9 L386.0,478.9 L388.0,474.0 L390.0,469.1 L392.0,464.2 L394.0,459.1 L396.0,454.0 L398.0,448.6 L400.0,443.2 L402.0,438.0 L404.0,433.6 L406.0,429.0 L408.0,422.6 L410.0,415.3 L412.0,407.4 L414.0,400.0 L416.0,394.0 L418.0,385.8 L420.0,376.4 L422.0,368.0 L424.0,361.3 L426.0,355.3 L428.0,349.6 L430.0,344.0 L432.0,338.5 L434.0,333.1 L436.0,327.7 L438.0,322.0 L440.0,315.3 L442.0,309.0 L444.0,304.2 L446.0,299.9 L448.0,296.0 L450.0,292.0 L452.0,287.8 L454.0,283.7 L456.0,279.7 L458.0,276.0 L460.0,272.8 L462.0,269.8 L464.0,266.9 L466.0,264.0 L468.0,260.9 L470.0,257.9 L472.0,254.8 L474.0,252.0 L476.0,249.2 L478.0,246.5 L480.0,244.0 L482.0,242.0 L484.0,240.3 L486.0,238.7 L488.0,237.5 L490.0,237.0 L492.0,237.0 L494.0,237.0 L496.0,237.0 L498.0,237.0 L500.0,237.0 L502.0,237.7 L504.0,239.4 L506.0,241.7 L508.0,244.0 L510.0,246.5 L512.0,249.5 L514.0,252.7 L516.0,256.0 L518.0,259.3 L520.0,262.7 L522.0,266.3 L524.0,270.0 L526.0,273.9 L528.0,278.1 L530.0,282.2 L532.0,286.0 L534.0,289.7 L536.0,293.3 L538.0,296.5 L540.0,299.0 L542.0,301.0 L544.0,302.7 L546.0,304.1 L548.0,305.0 L550.0,305.6 L552.0,306.2 L554.0,306.6 L556.0,306.9 L558.0,307.0 L560.0,306.8 L562.0,306.2 L564.0,305.5 L566.0,304.6 L568.0,303.7 L570.0,303.0 L572.0,302.3 L574.0,301.5 L576.0,300.8 L578.0,300.2 L580.0,300.0 L582.0,300.0 L584.0,300.0 L586.0,300.0 L588.0,300.0 L590.0,300.0 L592.0,300.3 L594.0,301.0 L596.0,301.9 L598.0,302.8 L600.0,303.5 L602.0,304.0 L604.0,304.5 L606.0,304.9 L608.0,305.0 L610.0,304.8 L612.0,304.4 L614.0,303.8 L616.0,302.9 L618.0,302.0 L620.0,300.4 L622.0,298.0 L624.0,295.0 L626.0,292.0 L628.0,288.8 L630.0,285.2 L632.0,281.5 L634.0,278.0 L636.0,275.0 L638.0,271.9 L640.0,267.7 L642.0,262.0 L644.0,256.0 L646.0,250.2 L648.0,244.3 L650.0,239.0 L652.0,234.3 L654.0,230.0 L656.0,225.9 L658.0,222.0 L660.0,218.0 L662.0,214.1 L664.0,210.3 L666.0,206.9 L668.0,204.0 L670.0,201.6 L672.0,199.4 L674.0,197.4 L676.0,195.5 L678.0,193.8 L680.0,192.0 L682.0,190.3 L684.0,188.7 L686.0,187.1 L688.0,185.6 L690.0,184.0 L692.0,182.4 L694.0,180.8 L696.0,179.2 L698.0,177.6 L700.0,176.0 L702.0,174.3 L704.0,172.6 L706.0,170.9 L708.0,169.4 L710.0,168.0 L712.0,166.8 L714.0,165.6 L716.0,164.6 L718.0,163.7 L720.0,163.0 L722.0,162.4 L724.0,161.9 L726.0,161.4 L728.0,161.1 L730.0,161.0 L732.0,161.1 L734.0,161.4 L736.0,161.8 L738.0,162.4 L740.0,163.0 L742.0,163.9 L744.0,165.2 L746.0,166.7 L748.0,168.4 L750.0,170.0 L752.0,171.7 L754.0,173.4 L756.0,175.3 L758.0,177.2 L760.0,179.0 L762.0,180.8 L764.0,182.7 L766.0,184.5 L768.0,186.3 L770.0,188.0 L772.0,189.7 L774.0,191.4 L776.0,193.0 L778.0,194.5 L780.0,196.0 L782.0,197.3 L784.0,198.6 L786.0,199.8 L788.0,201.0 L790.0,202.3 L792.0,203.7 L794.0,205.0 L796.0,206.3 L798.0,207.5 L800.0,208.6 L802.0,209.4 L804.0,210.1 L806.0,210.8 L808.0,211.4 L810.0,212.0 L812.0,212.5 L814.0,212.9 L816.0,213.3 L818.0,213.6 L820.0,214.0 L822.0,214.2 L824.0,214.4 L826.0,214.4 L828.0,214.1 L830.0,213.7 L832.0,213.2 L834.0,212.5 L836.0,211.8 L838.0,211.0 L840.0,210.2 L842.0,209.6 L844.0,209.0 L846.0,208.4 L848.0,207.9 L850.0,207.3 L852.0,206.8 L854.0,206.2 L856.0,205.8 L858.0,205.3 L860.0,205.0 L862.0,204.7 L864.0,204.4 L866.0,204.2 L868.0,204.0 L870.0,203.8 L872.0,203.6 L874.0,203.4 L876.0,203.2 L878.0,202.9 L880.0,202.6 L882.0,202.3 L884.0,202.0 L886.0,201.7 L888.0,201.4 L890.0,201.2 L892.0,201.0 L894.0,200.8 L896.0,200.6 L898.0,200.4 L900.0,200.2 L902.0,200.0 L904.0,199.9 L906.0,199.8 L908.0,199.8 L910.0,199.8 L912.0,199.9 L914.0,199.9 L916.0,200.0 L918.0,200.1 L920.0,200.2 L922.0,200.4 L924.0,200.5 L926.0,200.9 L928.0,201.6 L930.0,202.5 L932.0,203.6 L934.0,204.8 L936.0,206.1 L938.0,207.9 L940.0,210.1 L942.0,212.3 L944.0,214.6 L946.0,216.8 L948.0,219.0 L950.0,221.3 L952.0,223.7 L954.0,225.9 L956.0,228.1 L958.0,230.3 L960.0,232.4 L962.0,234.5 L964.0,236.5 L966.0,238.3 L968.0,240.0 L970.0,241.6 L972.0,243.1 L974.0,244.6 L976.0,245.9 L978.0,247.1 L980.0,248.2 L982.0,249.3 L984.0,250.3 L986.0,251.2 L988.0,252.1 L990.0,253.0 L992.0,253.9 L994.0,254.8 L996.0,255.5 L998.0,255.9 L1000.0,256.0 L1002.0,256.2 L1004.0,256.3 L1006.0,256.4 L1008.0,256.5 L1010.0,256.5 L1012.0,256.4 L1014.0,256.2 L1016.0,255.9 L1018.0,255.5 L1020.0,255.1 L1022.0,254.6 L1024.0,253.9 L1026.0,252.8 L1028.0,251.5 L1030.0,250.0 L1032.0,248.5 L1034.0,247.1 L1036.0,245.5 L1038.0,243.7 L1040.0,241.9 L1042.0,240.2 L1044.0,238.6 L1046.0,237.3 L1048.0,236.2 L1050.0,235.2 L1052.0,234.3 L1054.0,233.5 L1056.0,232.9 L1058.0,232.4 L1060.0,232.0 L1062.0,231.6 L1064.0,231.3 L1066.0,231.1 L1067.0,231.1" shape-rendering="crispEdges" stroke="#ffffff" stroke-width="3" fill="none" stroke-linejoin="round" stroke-linecap="round"/>
<path d="M0.0,568.0 L2.0,568.0 L4.0,567.9 L6.0,567.7 L8.0,567.5 L10.0,567.3 L12.0,567.0 L14.0,566.5 L16.0,565.8 L18.0,564.9 L20.0,564.0 L22.0,563.1 L24.0,562.1 L26.0,561.1 L28.0,560.0 L30.0,559.0 L32.0,558.0 L34.0,557.0 L36.0,555.9 L38.0,554.9 L40.0,554.0 L42.0,553.1 L44.0,552.2 L46.0,551.3 L48.0,550.4 L50.0,549.7 L52.0,549.0 L54.0,548.3 L56.0,547.7 L58.0,547.2 L60.0,547.0 L62.0,547.0 L64.0,547.0 L66.0,547.0 L68.0,547.0 L70.0,547.0 L72.0,547.3 L74.0,548.0 L76.0,549.0 L78.0,550.0 L80.0,551.0 L82.0,552.0 L84.0,553.1 L86.0,554.2 L88.0,555.0 L90.0,555.6 L92.0,555.9 L94.0,556.2 L96.0,556.4 L98.0,556.5 L100.0,556.6 L102.0,556.4 L104.0,555.8 L106.0,555.0 L108.0,554.0 L110.0,552.4 L112.0,549.8 L114.0,546.9 L116.0,544.0 L118.0,541.2 L120.0,538.2 L122.0,535.2 L124.0,532.0 L126.0,528.8 L128.0,525.5 L130.0,522.0 L132.0,517.7 L134.0,512.5 L136.0,508.0 L138.0,504.5 L140.0,501.3 L142.0,498.7 L144.0,497.0 L146.0,495.8 L148.0,494.8 L150.0,494.1 L152.0,493.7 L154.0,493.7 L156.0,494.2 L158.0,495.0 L160.0,496.0 L162.0,497.5 L164.0,499.6 L166.0,502.2 L168.0,505.0 L170.0,508.2 L172.0,512.0 L174.0,516.1 L176.0,520.0 L178.0,523.8 L180.0,527.6 L182.0,531.3 L184.0,535.0 L186.0,538.6 L188.0,542.2 L190.0,545.7 L192.0,549.0 L194.0,552.2 L196.0,555.4 L198.0,558.4 L200.0,561.0 L202.0,563.3 L204.0,565.4 L206.0,567.3 L208.0,569.1 L210.0,571.0 L212.0,572.9 L214.0,574.7 L216.0,576.4 L218.0,578.2 L220.0,580.0 L222.0,581.8 L224.0,583.7 L226.0,585.6 L228.0,587.3 L230.0,589.0 L232.0,590.5 L234.0,592.0 L236.0,593.4 L238.0,594.7 L240.0,596.0 L242.0,597.3 L244.0,598.6 L246.0,599.8 L248.0,601.0 L250.0,602.0 L252.0,603.0 L254.0,603.9 L256.0,604.8 L258.0,605.5 L260.0,606.0 L262.0,606.4 L264.0,606.7 L266.0,606.9 L268.0,607.0 L270.0,606.9 L272.0,606.8 L274.0,606.5 L276.0,606.2 L278.0,605.9 L280.0,605.6 L282.0,605.3 L284.0,604.9 L286.0,604.6 L288.0,604.2 L290.0,603.8 L292.0,603.4 L294.0,603.0 L296.0,602.6 L298.0,602.3 L300.0,602.0 L302.0,601.6 L304.0,601.3 L306.0,601.0 L308.0,600.6 L310.0,600.2 L312.0,599.9 L314.0,599.6 L316.0,599.2 L318.0,598.8 L320.0,598.4 L322.0,598.0 L324.0,597.5 L326.0,597.0 L328.0,596.5 L330.0,595.9 L332.0,595.3 L334.0,594.7 L336.0,594.0 L338.0,593.3 L340.0,592.5 L342.0,591.7 L344.0,590.8 L346.0,589.9 L348.0,589.0 L350.0,588.0 L352.0,587.0 L354.0,585.9 L356.0,584.7 L358.0,583.4 L360.0,582.0 L362.0,580.5 L364.0,578.8 L366.0,577.0 L368.0,575.0 L370.0,573.0 L372.0,570.9 L374.0,568.7 L376.0,566.4 L378.0,563.8 L380.0,561.0 L382.0,557.7 L384.0,554.0 L386.0,550.0 L388.0,546.0 L390.0,541.9 L392.0,537.6 L394.0,533.3 L396.0,529.0 L398.0,524.8 L400.0,520.6 L402.0,516.4 L404.0,512.0 L406.0,507.5 L408.0,503.0 L410.0,498.2 L412.0,493.0 L414.0,487.0 L416.0,480.8 L418.0,474.5 L420.0,468.2 L422.0,462.0 L424.0,455.9 L426.0,450.0 L428.0,444.5 L430.0,439.9 L432.0,435.7 L434.0,431.0 L436.0,424.9 L438.0,419.0 L440.0,414.7 L442.0,410.9 L444.0,407.5 L446.0,404.0 L448.0,400.4 L450.0,396.9 L452.0,393.5 L454.0,390.0 L456.0,386.4 L458.0,382.9 L460.0,379.3 L462.0,376.0 L464.0,372.8 L466.0,369.7 L468.0,366.8 L470.0,364.0 L472.0,361.3 L474.0,358.6 L476.0,356.1 L478.0,354.0 L480.0,352.1 L482.0,350.4 L484.0,348.9 L486.0,348.0 L488.0,347.4 L490.0,346.8 L492.0,346.4 L494.0,346.1 L496.0,346.0 L498.0,346.2 L500.0,346.6 L502.0,347.2 L504.0,348.0 L506.0,349.1 L508.0,350.8 L510.0,352.8 L512.0,355.0 L514.0,357.3 L516.0,360.0 L518.0,362.9 L520.0,366.0 L522.0,369.3 L524.0,372.8 L526.0,376.4 L528.0,380.0 L530.0,383.7 L532.0,387.5 L534.0,391.0 L536.0,394.0 L538.0,396.5 L540.0,398.7 L542.0,400.6 L544.0,402.0 L546.0,403.2 L548.0,404.2 L550.0,405.1 L552.0,405.8 L554.0,406.0 L556.0,405.9 L558.0,405.8 L560.0,405.6 L562.0,405.3 L564.0,405.0 L566.0,404.4 L568.0,403.6 L570.0,402.6 L572.0,401.6 L574.0,401.0 L576.0,400.6 L578.0,400.2 L580.0,399.9 L582.0,399.7 L584.0,399.6 L586.0,399.7 L588.0,399.9 L590.0,400.2 L592.0,400.6 L594.0,401.0 L596.0,401.5 L598.0,402.3 L600.0,403.0 L602.0,403.6 L604.0,404.0 L606.0,404.2 L608.0,404.3 L610.0,404.4 L612.0,404.4 L614.0,404.0 L616.0,403.0 L618.0,401.5 L620.0,400.0 L622.0,398.1 L624.0,395.7 L626.0,393.0 L628.0,389.7 L630.0,386.0 L632.0,382.5 L634.0,378.9 L636.0,375.4 L638.0,371.7 L640.0,368.0 L642.0,364.1 L644.0,360.1 L646.0,356.0 L648.0,352.0 L650.0,347.9 L652.0,343.7 L654.0,339.7 L656.0,336.0 L658.0,332.7 L660.0,329.6 L662.0,326.7 L664.0,324.0 L666.0,321.5 L668.0,319.1 L670.0,316.9 L672.0,315.0 L674.0,313.4 L676.0,311.9 L678.0,310.6 L680.0,309.3 L682.0,308.1 L684.0,307.0 L686.0,305.9 L688.0,305.0 L690.0,304.1 L692.0,303.2 L694.0,302.2 L696.0,301.0 L698.0,299.5 L700.0,297.7 L702.0,295.7 L704.0,293.7 L706.0,292.0 L708.0,290.4 L710.0,288.8 L712.0,287.3 L714.0,286.0 L716.0,285.0 L718.0,284.2 L720.0,283.3 L722.0,282.7 L724.0,282.2 L726.0,282.0 L728.0,282.0 L730.0,282.1 L732.0,282.2 L734.0,282.3 L736.0,282.4 L738.0,282.7 L740.0,283.3 L742.0,284.1 L744.0,285.0 L746.0,286.0 L748.0,287.2 L750.0,288.8 L752.0,290.5 L754.0,292.3 L756.0,294.0 L758.0,295.6 L760.0,297.3 L762.0,298.9 L764.0,300.5 L766.0,302.0 L768.0,303.5 L770.0,304.9 L772.0,306.3 L774.0,307.7 L776.0,309.0 L778.0,310.3 L780.0,311.5 L782.0,312.8 L784.0,313.9 L786.0,315.0 L788.0,316.0 L790.0,317.0 L792.0,317.9 L794.0,318.7 L796.0,319.6 L798.0,320.4 L800.0,321.3 L802.0,322.1 L804.0,322.9 L806.0,323.5 L808.0,324.1 L810.0,324.7 L812.0,325.3 L814.0,325.9 L816.0,326.4 L818.0,326.8 L820.0,327.1 L822.0,327.2 L824.0,327.2 L826.0,326.9 L828.0,326.6 L830.0,326.1 L832.0,325.5 L834.0,324.9 L836.0,324.4 L838.0,323.8 L840.0,323.4 L842.0,322.8 L844.0,322.3 L846.0,321.7 L848.0,321.2 L850.0,320.7 L852.0,320.2 L854.0,319.8 L856.0,319.4 L858.0,319.1 L860.0,318.8 L862.0,318.6 L864.0,318.3 L866.0,318.1 L868.0,317.8 L870.0,317.6 L872.0,317.5 L874.0,317.3 L876.0,317.2 L878.0,317.1 L880.0,316.9 L882.0,316.8 L884.0,316.7 L886.0,316.5 L888.0,316.4 L890.0,316.2 L892.0,316.0 L894.0,315.8 L896.0,315.5 L898.0,315.4 L900.0,315.2 L902.0,315.0 L904.0,314.9 L906.0,314.8 L908.0,314.7 L910.0,314.6 L912.0,314.5 L914.0,314.4 L916.0,314.4 L918.0,314.5 L920.0,314.8 L922.0,315.1 L924.0,315.6 L926.0,316.1 L928.0,316.7 L930.0,317.4 L932.0,318.3 L934.0,319.5 L936.0,321.0 L938.0,322.4 L940.0,323.9 L942.0,325.5 L944.0,327.3 L946.0,329.1 L948.0,330.9 L950.0,332.7 L952.0,334.3 L954.0,336.0 L956.0,337.7 L958.0,339.3 L960.0,340.9 L962.0,342.4 L964.0,343.9 L966.0,345.3 L968.0,346.7 L970.0,348.0 L972.0,349.3 L974.0,350.6 L976.0,351.9 L978.0,353.2 L980.0,354.5 L982.0,356.0 L984.0,357.3 L986.0,358.6 L988.0,359.7 L990.0,360.5 L992.0,361.2 L994.0,361.8 L996.0,362.4 L998.0,362.9 L1000.0,363.4 L1002.0,363.7 L1004.0,363.9 L1006.0,364.0 L1008.0,363.9 L1010.0,363.6 L1012.0,363.1 L1014.0,362.6 L1016.0,361.9 L1018.0,361.2 L1020.0,360.5 L1022.0,359.7 L1024.0,358.7 L1026.0,357.5 L1028.0,356.3 L1030.0,355.0 L1032.0,353.7 L1034.0,352.5 L1036.0,351.4 L1038.0,350.4 L1040.0,349.3 L1042.0,348.3 L1044.0,347.4 L1046.0,346.5 L1048.0,345.6 L1050.0,344.7 L1052.0,343.9 L1054.0,343.2 L1056.0,342.6 L1058.0,342.2 L1060.0,341.8 L1062.0,341.5 L1064.0,341.2 L1066.0,341.0 L1067.0,341.0" shape-rendering="crispEdges" stroke="#ff0000" stroke-width="3" fill="none" stroke-linejoin="round" stroke-linecap="round"/>
<use href="#st" x="151.4" y="436.4"/>
<use href="#st" x="138.6" y="457.4"/>
<use href="#st" x="103.4" y="553.4"/>
<use href="#st" x="425.3" y="359.5"/>
<use href="#st" x="423.4" y="426.4"/>
<use href="#st" x="458.4" y="306.0"/>
<use href="#st" x="484.4" y="269.0"/>
<use href="#st" x="578.0" y="206.4"/>
<use href="#st" x="707.4" y="231.4"/>
<use href="#gi" x="15.0" y="453.0"/>
<use href="#yi" x="20.0" y="514.0"/>
<use href="#gi" x="25.0" y="497.0"/>
<use href="#yi" x="35.0" y="514.0"/>
<use href="#gi" x="43.0" y="474.0"/>
<use href="#yi" x="45.0" y="499.0"/>
<use href="#gi" x="53.0" y="451.6"/>
<use href="#yi" x="71.0" y="495.0"/>
<use href="#gi" x="81.0" y="448.0"/>
<use href="#yi" x="88.0" y="484.0"/>
<use href="#gi" x="93.0" y="473.6"/>
<use href="#yi" x="110.0" y="535.0"/>
<use href="#gi" x="116.0" y="508.0"/>
<use href="#yi" x="119.0" y="528.0"/>
<use href="#gi" x="152.0" y="350.0"/>
<use href="#yi" x="164.6" y="382.0"/>
<use href="#gi" x="170.0" y="370.0"/>
<use href="#yi" x="190.0" y="512.0"/>
<use href="#gi" x="195.0" y="486.0"/>
<use href="#yi" x="215.0" y="538.0"/>
<use href="#gi" x="231.0" y="505.6"/>
<use href="#yi" x="243.0" y="553.0"/>
<use href="#gi" x="249.0" y="530.0"/>
<use href="#yi" x="258.6" y="572.0"/>
<use href="#gi" x="264.0" y="553.0"/>
<use href="#yi" x="271.0" y="574.0"/>
<use href="#gi" x="286.0" y="527.0"/>
<use href="#yi" x="292.0" y="548.0"/>
<use href="#gi" x="296.5" y="525.6"/>
<use href="#yi" x="302.0" y="556.0"/>
<use href="#gi" x="307.0" y="532.0"/>
<use href="#yi" x="325.0" y="569.0"/>
<use href="#gi" x="337.0" y="516.0"/>
<use href="#yi" x="353.0" y="545.0"/>
<use href="#gi" x="359.5" y="531.0"/>
<use href="#yi" x="364.6" y="552.6"/>
<use href="#gi" x="370.0" y="531.0"/>
<use href="#yi" x="373.0" y="546.0"/>
<use href="#gi" x="388.0" y="439.6"/>
<use href="#yi" x="401.0" y="512.0"/>
<use href="#gi" x="444.0" y="282.0"/>
<use href="#yi" x="454.0" y="314.0"/>
<use href="#gi" x="459.0" y="265.6"/>
<use href="#yi" x="465.0" y="330.0"/>
<use href="#gi" x="477.0" y="250.6"/>
<use href="#yi" x="480.0" y="277.0"/>
<use href="#gi" x="490.0" y="215.6"/>
<use href="#yi" x="498.0" y="237.0"/>
<use href="#gi" x="505.0" y="197.0"/>
<use href="#yi" x="533.0" y="299.0"/>
<use href="#gi" x="538.0" y="264.0"/>
<use href="#yi" x="548.0" y="372.0"/>
<use href="#gi" x="553.0" y="338.6"/>
<use href="#yi" x="561.0" y="383.0"/>
<use href="#gi" x="579.0" y="250.6"/>
<use href="#yi" x="589.0" y="330.0"/>
<use href="#gi" x="592.0" y="292.5"/>
<use href="#yi" x="594.0" y="322.0"/>
<use href="#gi" x="602.0" y="290.6"/>
<use href="#yi" x="606.0" y="339.5"/>
<use href="#gi" x="609.4" y="307.0"/>
<use href="#yi" x="613.6" y="345.0"/>
<use href="#gi" x="620.0" y="322.0"/>
<use href="#yi" x="624.6" y="347.0"/>
<use href="#gi" x="630.0" y="329.0"/>
<use href="#yi" x="635.0" y="352.0"/>
<use href="#gi" x="663.0" y="191.6"/>
<use href="#yi" x="665.0" y="215.6"/>
<use href="#gi" x="670.0" y="152.5"/>
<use href="#yi" x="675.0" y="208.0"/>
<use href="#gi" x="681.0" y="175.0"/>
<use href="#yi" x="685.0" y="212.0"/>
<use href="#gi" x="692.6" y="209.0"/>
<use href="#yi" x="698.0" y="318.0"/>
<use href="#gi" x="713.6" y="141.0"/>
<use href="#yi" x="718.6" y="180.0"/>
<use href="#gi" x="720.6" y="135.6"/>
<use href="#yi" x="728.6" y="186.0"/>
<use href="#gi" x="733.6" y="138.0"/>
<use href="#yi" x="739.4" y="182.0"/>
<use href="#gi" x="747.0" y="125.0"/>
<use href="#yi" x="764.0" y="210.0"/>
<use href="#gi" x="769.0" y="148.0"/>
<use href="#yi" x="774.0" y="229.0"/>
<use href="#gi" x="781.5" y="200.0"/>
<use href="#yi" x="782.5" y="230.0"/>
<use href="#gi" x="800.0" y="180.0"/>
<use href="#yi" x="822.6" y="274.0"/>
<use href="#gi" x="832.4" y="209.8"/>
<use href="#yi" x="836.0" y="234.5"/>
<use href="#gi" x="843.0" y="197.7"/>
<use href="#yi" x="850.5" y="228.0"/>
<use href="#gi" x="863.8" y="200.2"/>
<use href="#yi" x="869.0" y="221.2"/>
<use href="#gi" x="875.8" y="185.2"/>
<use href="#yi" x="883.8" y="226.5"/>
<use href="#gi" x="888.6" y="194.8"/>
<use href="#yi" x="897.0" y="240.7"/>
<use href="#gi" x="906.4" y="191.2"/>
<use href="#yi" x="911.8" y="220.6"/>
<use href="#gi" x="917.0" y="183.6"/>
<use href="#yi" x="925.0" y="216.2"/>
<use href="#gi" x="934.4" y="160.6"/>
<use href="#yi" x="940.2" y="205.8"/>
<use href="#gi" x="941.8" y="165.7"/>
<use href="#yi" x="959.7" y="276.6"/>
<use href="#gi" x="965.0" y="229.2"/>
<use href="#yi" x="969.5" y="271.8"/>
<use href="#gi" x="973.0" y="241.8"/>
<use href="#yi" x="978.3" y="270.5"/>
<use href="#gi" x="985.8" y="225.8"/>
<use href="#yi" x="1001.0" y="297.0"/>
<use href="#gi" x="1005.7" y="258.5"/>
<use href="#yi" x="1008.0" y="288.3"/>
<use href="#gi" x="1013.4" y="253.2"/>
<use href="#yi" x="1024.0" y="288.6"/>
<use href="#gi" x="1040.8" y="239.1"/>
<use href="#yi" x="1047.0" y="273.7"/>
<path d="M706.5,70.5V66.5H709.5M706.5,66.5L717.5,70.5" stroke="#c8c8c8" stroke-width="1" fill="none"/>
<text x="719.3" y="76.3" font-size="12" fill="#c8c8c8" font-family="Liberation Sans, sans-serif">16.37</text>
<path d="M255.5,575.5H267M258.5,573L255.5,575.5L258.5,578" stroke="#c8c8c8" stroke-width="1" fill="none"/>
<text x="268.6" y="581.2" font-size="12" fill="#c8c8c8" font-family="Liberation Sans, sans-serif">7.12</text>
</svg>
<!-- top toolbar -->
<div class="hl" style="left:0;top:19px;width:1126px"></div>
<div class="vl" style="left:0;top:0;height:20px"></div>
<div class="vl" style="left:23px;top:0;height:20px"></div>
<svg class="abs" style="left:5px;top:3px" width="13" height="12" viewBox="0 0 13 12"><rect x="0.75" y="0.75" width="11.5" height="10" rx="2" fill="none" stroke="#a0a0a0" stroke-width="1.3"/><rect x="7" y="2.5" width="3.2" height="6.5" fill="#c0c0c0"/></svg>
<div class="tb" style="left:28px">分时</div>
<div class="tb" style="left:61px">1分钟</div>
<div class="tb" style="left:100px">5分钟</div>
<div class="tb" style="left:139px">15分钟</div>
<div class="tb" style="left:185px">30分钟</div>
<div class="tb" style="left:231px">60分钟</div>
<div class="tb" style="left:278px;color:#3cf0ff">日线</div>
<div class="tb" style="left:312px">周线</div>
<div class="tb" style="left:345px">月线</div>
<div class="tb" style="left:379px">多周期</div>
<div class="tb" style="left:423px">更多</div>
<div class="tb" style="left:449px">&gt;</div>
<!-- right buttons -->
<div class="vl" style="left:810px;top:0;height:20px"></div>
<div class="vl" style="left:844px;top:0;height:20px"></div>
<div class="vl" style="left:879px;top:0;height:20px"></div>
<div class="vl" style="left:914px;top:0;height:20px"></div>
<div class="vl" style="left:949px;top:0;height:20px"></div>
<div class="vl" style="left:984px;top:0;height:20px"></div>
<div class="vl" style="left:1019px;top:0;height:20px"></div>
<div class="vl" style="left:1054px;top:0;height:20px"></div>
<div class="vl" style="left:1089px;top:0;height:20px"></div>
<div class="tb" style="left:816px">复权</div>
<div class="tb" style="left:850px">叠加</div>
<div class="tb" style="left:885px">多股</div>
<div class="tb" style="left:920px">统计</div>
<div class="tb" style="left:955px">画线</div>
<div class="tb" style="left:992px">F10</div>
<div class="tb" style="left:1025px">标记</div>
<div class="tb" style="left:1057px">+自选</div>
<div class="tb" style="left:1096px">返回</div>
<!-- title row -->
<div class="abs" style="left:3px;top:22px;color:#c8c8c8">洪汇新材(日线.前复权)</div>
<svg class="abs" style="left:128px;top:23px" width="13" height="13" viewBox="0 0 13 13"><circle cx="6.5" cy="6.5" r="6" fill="#8a8a8a"/><path d="M3.4,5.2 L6.5,8.2 L9.6,5.2" fill="none" stroke="#1a1a1a" stroke-width="1.6"/></svg>
<div class="abs" style="left:144px;top:22px;color:#ff1818">MA60:</div>
<!-- right icons -->
<svg class="abs" style="left:1041px;top:23px" width="34" height="13" viewBox="0 0 34 13"><path d="M6.5,1 L12,6.5 L6.5,12 L1,6.5Z" fill="none" stroke="#a8a8a8" stroke-width="1"/><rect x="20.6" y="1.6" width="11" height="9.6" rx="2" fill="none" stroke="#a0a0a0" stroke-width="1.3"/><rect x="26.5" y="3.2" width="3.4" height="6.4" fill="#c0c0c0"/></svg>
<!-- right axis -->
<div class="vl" style="left:1075px;top:20px;height:580px"></div>
<div class="vl" style="left:1126px;top:0px;height:600px"></div>
<div class="hl" style="left:1126px;top:25px;width:4px"></div>
<div class="hl" style="left:1126px;top:45px;width:4px"></div>
<div class="hl" style="left:1128px;top:60px;width:2px;background:#b0b0b0"></div><div class="hl" style="left:1128px;top:78px;width:2px;background:#b0b0b0"></div><div class="hl" style="left:1128px;top:98px;width:2px;background:#b0b0b0"></div><div class="hl" style="left:1128px;top:116px;width:2px;background:#b0b0b0"></div><div class="hl" style="left:1128px;top:136px;width:2px;background:#b0b0b0"></div><div class="hl" style="left:1128px;top:154px;width:2px;background:#b0b0b0"></div><div class="hl" style="left:1128px;top:174px;width:2px;background:#b0b0b0"></div><div class="hl" style="left:1128px;top:192px;width:2px;background:#b0b0b0"></div><div class="hl" style="left:1128px;top:212px;width:2px;background:#b0b0b0"></div><div class="hl" style="left:1128px;top:230px;width:2px;background:#b0b0b0"></div><div class="hl" style="left:1128px;top:250px;width:2px;background:#b0b0b0"></div><div class="hl" style="left:1128px;top:268px;width:2px;background:#b0b0b0"></div><div class="hl" style="left:1128px;top:288px;width:2px;background:#b0b0b0"></div><div class="hl" style="left:1128px;top:306px;width:2px;background:#b0b0b0"></div><div class="hl" style="left:1128px;top:326px;width:2px;background:#b0b0b0"></div><div class="hl" style="left:1128px;top:344px;width:2px;background:#b0b0b0"></div><div class="hl" style="left:1128px;top:364px;width:2px;background:#b0b0b0"></div><div class="hl" style="left:1128px;top:382px;width:2px;background:#b0b0b0"></div><div class="hl" style="left:1128px;top:402px;width:2px;background:#b0b0b0"></div><div class="hl" style="left:1128px;top:420px;width:2px;background:#b0b0b0"></div><div class="hl" style="left:1128px;top:440px;width:2px;background:#b0b0b0"></div><div class="hl" style="left:1128px;top:458px;width:2px;background:#b0b0b0"></div><div class="hl" style="left:1128px;top:478px;width:2px;background:#b0b0b0"></div><div class="hl" style="left:1128px;top:496px;width:2px;background:#b0b0b0"></div><div class="hl" style="left:1128px;top:516px;width:2px;background:#b0b0b0"></div><div class="hl" style="left:1128px;top:534px;width:2px;background:#b0b0b0"></div><div class="hl" style="left:1128px;top:554px;width:2px;background:#b0b0b0"></div><div class="hl" style="left:1128px;top:572px;width:2px;background:#b0b0b0"></div><div class="hl" style="left:1128px;top:592px;width:2px;background:#b0b0b0"></div><div class="hl" style="left:1128px;top:31px;width:2px;background:#b0b0b0"></div><div class="hl" style="left:1128px;top:34px;width:2px;background:#b0b0b0"></div><div class="hl" style="left:1128px;top:37px;width:2px;background:#b0b0b0"></div>
<div class="hl" style="left:1075px;top:87px;width:6px"></div>
<div class="ax" style="top:80px">16.00</div>
<div class="hl" style="left:1075px;top:142px;width:6px"></div>
<div class="ax" style="top:135px">15.00</div>
<div class="hl" style="left:1075px;top:197px;width:6px"></div>
<div class="ax" style="top:190px">14.00</div>
<div class="hl" style="left:1075px;top:252px;width:6px"></div>
<div class="ax" style="top:245px">13.00</div>
<div class="hl" style="left:1075px;top:307px;width:6px"></div>
<div class="ax" style="top:300px">12.00</div>
<div class="hl" style="left:1075px;top:362px;width:6px"></div>
<div class="ax" style="top:355px">11.00</div>
<div class="hl" style="left:1075px;top:417px;width:6px"></div>
<div class="ax" style="top:410px">10.00</div>
<div class="hl" style="left:1075px;top:472px;width:6px"></div>
<div class="ax" style="top:465px">9.00</div>
<div class="hl" style="left:1075px;top:527px;width:6px"></div>
<div class="ax" style="top:520px">8.00</div>
<div class="abs" style="left:1076px;top:429px;width:50px;height:15px;background:#00007f;"></div>
<div class="hl" style="left:1075px;top:428px;width:52px"></div>
<div class="hl" style="left:1075px;top:444px;width:52px"></div>
<div class="hl" style="left:1126px;top:418px;width:4px"></div>
<div class="hl" style="left:1126px;top:437px;width:4px"></div>
<div class="abs" style="left:1076px;top:429px;color:#d0d0d0;font-size:12px">9.50</div>
<!-- bottom axis -->
<div class="hl" style="left:0;top:630px;width:978px"></div>
<div class="hl" style="left:0;top:646px;width:978px"></div>
<div class="mo" style="left:2px">2024年</div>
<div class="vl" style="left:71px;top:630px;height:16px"></div>
<div class="mo" style="left:73px">4</div>
<div class="vl" style="left:122px;top:630px;height:16px"></div>
<div class="mo" style="left:124px">5</div>
<div class="vl" style="left:174px;top:630px;height:16px"></div>
<div class="mo" style="left:176px">6</div>
<div class="vl" style="left:221px;top:630px;height:16px"></div>
<div class="mo" style="left:223px">7</div>
<div class="vl" style="left:280px;top:630px;height:16px"></div>
<div class="mo" style="left:282px">8</div>
<div class="vl" style="left:335px;top:630px;height:16px"></div>
<div class="mo" style="left:337px">9</div>
<div class="vl" style="left:384px;top:630px;height:16px"></div>
<div class="mo" style="left:386px">10</div>
<div class="vl" style="left:430px;top:630px;height:16px"></div>
<div class="mo" style="left:432px">11</div>
<div class="vl" style="left:483px;top:630px;height:16px"></div>
<div class="mo" style="left:485px">12</div>
<div class="vl" style="left:539px;top:630px;height:16px"></div>
<div class="mo" style="left:541px">1</div>
<div class="vl" style="left:684px;top:630px;height:16px"></div>
<div class="mo" style="left:686px">4</div>
<div class="vl" style="left:737px;top:630px;height:16px"></div>
<div class="mo" style="left:739px">5</div>
<div class="vl" style="left:786px;top:630px;height:16px"></div>
<div class="mo" style="left:788px">6</div>
<div class="vl" style="left:837px;top:630px;height:16px"></div>
<div class="mo" style="left:839px">7</div>
<div class="vl" style="left:895px;top:630px;height:16px"></div>
<div class="mo" style="left:897px">8</div>
<div class="vl" style="left:948px;top:630px;height:16px"></div>
<div class="mo" style="left:950px">9</div>
<div class="vl" style="left:84px;top:630px;height:3px"></div>
<div class="vl" style="left:97px;top:630px;height:3px"></div>
<div class="vl" style="left:109px;top:630px;height:3px"></div>
<div class="vl" style="left:122px;top:630px;height:3px"></div>
<div class="vl" style="left:134px;top:630px;height:3px"></div>
<div class="vl" style="left:146px;top:630px;height:3px"></div>
<div class="vl" style="left:159px;top:630px;height:3px"></div>
<div class="vl" style="left:171px;top:630px;height:3px"></div>
<div class="vl" style="left:184px;top:630px;height:3px"></div>
<div class="vl" style="left:196px;top:630px;height:3px"></div>
<div class="vl" style="left:208px;top:630px;height:3px"></div>
<div class="vl" style="left:221px;top:630px;height:3px"></div>
<div class="vl" style="left:233px;top:630px;height:3px"></div>
<div class="vl" style="left:246px;top:630px;height:3px"></div>
<div class="vl" style="left:258px;top:630px;height:3px"></div>
<div class="vl" style="left:271px;top:630px;height:3px"></div>
<div class="vl" style="left:283px;top:630px;height:3px"></div>
<div class="vl" style="left:295px;top:630px;height:3px"></div>
<div class="vl" style="left:308px;top:630px;height:3px"></div>
<div class="vl" style="left:320px;top:630px;height:3px"></div>
<div class="vl" style="left:333px;top:630px;height:3px"></div>
<div class="vl" style="left:345px;top:630px;height:3px"></div>
<div class="vl" style="left:358px;top:630px;height:3px"></div>
<div class="vl" style="left:370px;top:630px;height:3px"></div>
<div class="vl" style="left:382px;top:630px;height:3px"></div>
<div class="vl" style="left:395px;top:630px;height:3px"></div>
<div class="vl" style="left:407px;top:630px;height:3px"></div>
<div class="vl" style="left:420px;top:630px;height:3px"></div>
<div class="vl" style="left:432px;top:630px;height:3px"></div>
<div class="vl" style="left:444px;top:630px;height:3px"></div>
<div class="vl" style="left:457px;top:630px;height:3px"></div>
<div class="vl" style="left:469px;top:630px;height:3px"></div>
<div class="vl" style="left:482px;top:630px;height:3px"></div>
<div class="vl" style="left:494px;top:630px;height:3px"></div>
<div class="vl" style="left:507px;top:630px;height:3px"></div>
<div class="vl" style="left:519px;top:630px;height:3px"></div>
<div class="vl" style="left:531px;top:630px;height:3px"></div>
<div class="vl" style="left:544px;top:630px;height:3px"></div>
<div class="vl" style="left:556px;top:630px;height:3px"></div>
<div class="vl" style="left:569px;top:630px;height:3px"></div>
<div class="vl" style="left:581px;top:630px;height:3px"></div>
<div class="vl" style="left:594px;top:630px;height:3px"></div>
<div class="vl" style="left:606px;top:630px;height:3px"></div>
<div class="vl" style="left:618px;top:630px;height:3px"></div>
<div class="vl" style="left:631px;top:630px;height:3px"></div>
<div class="vl" style="left:643px;top:630px;height:3px"></div>
<div class="vl" style="left:656px;top:630px;height:3px"></div>
<div class="vl" style="left:668px;top:630px;height:3px"></div>
<div class="vl" style="left:680px;top:630px;height:3px"></div>
<div class="vl" style="left:693px;top:630px;height:3px"></div>
<div class="vl" style="left:705px;top:630px;height:3px"></div>
<div class="vl" style="left:718px;top:630px;height:3px"></div>
<div class="vl" style="left:730px;top:630px;height:3px"></div>
<div class="vl" style="left:743px;top:630px;height:3px"></div>
<div class="vl" style="left:755px;top:630px;height:3px"></div>
<div class="vl" style="left:767px;top:630px;height:3px"></div>
<div class="vl" style="left:780px;top:630px;height:3px"></div>
<div class="vl" style="left:792px;top:630px;height:3px"></div>
<div class="vl" style="left:805px;top:630px;height:3px"></div>
<div class="vl" style="left:817px;top:630px;height:3px"></div>
<div class="vl" style="left:829px;top:630px;height:3px"></div>
<div class="vl" style="left:842px;top:630px;height:3px"></div>
<div class="vl" style="left:854px;top:630px;height:3px"></div>
<div class="vl" style="left:867px;top:630px;height:3px"></div>
<div class="vl" style="left:879px;top:630px;height:3px"></div>
<div class="vl" style="left:892px;top:630px;height:3px"></div>
<div class="vl" style="left:904px;top:630px;height:3px"></div>
<div class="vl" style="left:916px;top:630px;height:3px"></div>
<div class="vl" style="left:929px;top:630px;height:3px"></div>
<div class="vl" style="left:941px;top:630px;height:3px"></div>
<div class="vl" style="left:954px;top:630px;height:3px"></div>
<div class="vl" style="left:966px;top:630px;height:3px"></div>
<div class="vl" style="left:43px;top:646px;height:4px"></div>
<div class="vl" style="left:74px;top:646px;height:4px"></div>
<div class="vl" style="left:116px;top:646px;height:4px"></div>
<div class="vl" style="left:144px;top:646px;height:4px"></div>
<div class="vl" style="left:178px;top:646px;height:4px"></div>
<div class="vl" style="left:208px;top:646px;height:4px"></div>
<div class="vl" style="left:241px;top:646px;height:4px"></div>
<div class="vl" style="left:283px;top:646px;height:4px"></div>
<div class="vl" style="left:309px;top:646px;height:4px"></div>
<div class="vl" style="left:335px;top:646px;height:4px"></div>
<div class="vl" style="left:365px;top:646px;height:4px"></div>
<div class="vl" style="left:391px;top:646px;height:4px"></div>
<div class="vl" style="left:422px;top:646px;height:4px"></div>
<div class="vl" style="left:452px;top:646px;height:4px"></div>
<div class="vl" style="left:480px;top:646px;height:4px"></div>
<div class="vl" style="left:508px;top:646px;height:4px"></div>
<div class="vl" style="left:537px;top:646px;height:4px"></div>
<div class="vl" style="left:568px;top:646px;height:4px"></div>
<div class="vl" style="left:600px;top:646px;height:4px"></div>
<div class="vl" style="left:630px;top:646px;height:4px"></div>
<div class="vl" style="left:664px;top:646px;height:4px"></div>
<div class="vl" style="left:696px;top:646px;height:4px"></div>
<div class="vl" style="left:736px;top:646px;height:4px"></div>
<div class="vl" style="left:767px;top:646px;height:4px"></div>
<div class="vl" style="left:807px;top:646px;height:4px"></div>
<div class="vl" style="left:840px;top:646px;height:4px"></div>
<div class="vl" style="left:871px;top:646px;height:4px"></div>
<div class="abs" style="left:578px;top:631px;width:78px;height:15px;background:#00007f;"></div>
<div class="abs" style="left:580px;top:632px;color:#e8e8e8;font-size:12px">2025/01/23/四</div>
<!-- badges -->
<div class="badge" style="left:141.5px;top:616px;width:12.5px;background:#8f4a08;font-size:12px">榜</div>
<div class="badge" style="left:685px;top:616px;width:10px;background:#008000">跌</div>
<div class="badge" style="left:695px;top:616px;width:13px;background:#800000">涨</div>
<div class="badge" style="left:917px;top:616px;width:13px;background:#964b00;font-size:12px">回</div>
<div class="abs" style="left:255.7px;top:620.7px;color:#ff1010;font-weight:bold;font-size:10px;line-height:10px">S</div>
<svg class="abs" style="left:256px;top:618px" width="6" height="3"><path d="M0,3 L3,0 L6,3Z" fill="#ff1010"/></svg>
<div class="abs" style="left:433.7px;top:620.7px;color:#ff1010;font-weight:bold;font-size:10px;line-height:10px">S</div>
<svg class="abs" style="left:434px;top:618px" width="6" height="3"><path d="M0,3 L3,0 L6,3Z" fill="#ff1010"/></svg>
<div class="abs" style="left:860.7px;top:620.7px;color:#ff1010;font-weight:bold;font-size:10px;line-height:10px">S</div>
<svg class="abs" style="left:861px;top:618px" width="6" height="3"><path d="M0,3 L3,0 L6,3Z" fill="#ff1010"/></svg>
<!-- chart labels -->
<!-- fragments of the lower panel -->
<div class="abs" style="left:7px;top:647px;width:2px;height:3px;background:#d0d0d0"></div>
<div class="abs" style="left:11px;top:647px;width:2px;height:3px;background:#d0d0d0"></div>
<div class="abs" style="left:15px;top:647px;width:1px;height:3px;background:#d0d0d0"></div>
<div class="abs" style="left:18px;top:647px;width:2px;height:3px;background:#d0d0d0"></div>
<div class="abs" style="left:22px;top:648px;width:1px;height:2px;background:#d0d0d0"></div>
<div class="abs" style="left:51px;top:648px;width:1px;height:2px;background:#d0d0d0"></div>
<div class="abs" style="left:829px;top:648px;width:1px;height:2px;background:#d0d0d0"></div>
<div class="abs" style="left:844px;top:648px;width:3px;height:2px;background:#30e0f0"></div>
<div class="abs" style="left:849px;top:648px;width:4px;height:2px;background:#30e0f0"></div>
<div class="abs" style="left:857px;top:648px;width:9px;height:2px;background:#30e0f0"></div>
<!-- watermark -->
<div class="abs" style="left:979px;top:600px;width:151px;height:50px;background:#000"></div>
<div class="abs" style="left:998px;top:608px;font-family:'Liberation Serif','Noto Serif CJK SC',serif;font-weight:900;font-size:19px;letter-spacing:2px;line-height:24px;color:#fff">乐淘公式网</div>
<div class="abs" style="left:1001px;top:631px;font-family:'Liberation Serif',serif;font-weight:bold;font-size:15px;line-height:16px;color:#fff">www.60lt.com</div>
</body>
</html>
